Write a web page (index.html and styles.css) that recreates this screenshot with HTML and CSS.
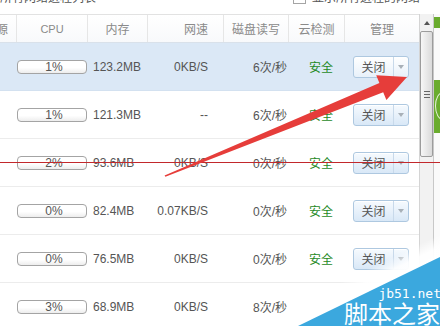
FILE: index.html
```html
<!DOCTYPE html>
<html lang="zh">
<head>
<meta charset="utf-8">
<link rel="stylesheet" href="styles.css">
</head>
<body>
<div class="screen">
  <div class="topbar">
    <span class="topbar-left">所有网络进程列表</span>
    <span class="topbar-check"><span class="cb"></span>显示所有进程的网络</span>
  </div>
  <div class="main">
    <div class="table">
      <div class="thead">
        <div class="th th-src">源</div>
        <div class="th th-cpu">CPU</div>
        <div class="th">内存</div>
        <div class="th th-speed">网速</div>
        <div class="th">磁盘读写</div>
        <div class="th">云检测</div>
        <div class="th">管理</div>
      </div>

      <div class="row selected">
        <div class="td"></div>
        <div class="td"><div class="bar">1%</div></div>
        <div class="td mem">123.2MB</div>
        <div class="td speed">0KB/S</div>
        <div class="td disk">6次/秒</div>
        <div class="td safe">安全</div>
        <div class="td manage"><div class="btn btn-active"><span class="btn-label">关闭</span><span class="btn-drop"></span></div></div>
      </div>
      <div class="row">
        <div class="td"></div>
        <div class="td"><div class="bar">1%</div></div>
        <div class="td mem">121.3MB</div>
        <div class="td speed">--</div>
        <div class="td disk">6次/秒</div>
        <div class="td safe">安全</div>
        <div class="td manage"><div class="btn"><span class="btn-label">关闭</span><span class="btn-drop"></span></div></div>
      </div>
      <div class="row">
        <div class="td"></div>
        <div class="td"><div class="bar">2%</div></div>
        <div class="td mem">93.6MB</div>
        <div class="td speed">0KB/S</div>
        <div class="td disk">0次/秒</div>
        <div class="td safe">安全</div>
        <div class="td manage"><div class="btn"><span class="btn-label">关闭</span><span class="btn-drop"></span></div></div>
      </div>
      <div class="row">
        <div class="td"></div>
        <div class="td"><div class="bar">0%</div></div>
        <div class="td mem">82.4MB</div>
        <div class="td speed">0.07KB/S</div>
        <div class="td disk">0次/秒</div>
        <div class="td safe">安全</div>
        <div class="td manage"><div class="btn"><span class="btn-label">关闭</span><span class="btn-drop"></span></div></div>
      </div>
      <div class="row">
        <div class="td"></div>
        <div class="td"><div class="bar">0%</div></div>
        <div class="td mem">76.5MB</div>
        <div class="td speed">0KB/S</div>
        <div class="td disk">0次/秒</div>
        <div class="td safe">安全</div>
        <div class="td manage"><div class="btn"><span class="btn-label">关闭</span><span class="btn-drop"></span></div></div>
      </div>
      <div class="row">
        <div class="td"></div>
        <div class="td"><div class="bar">3%</div></div>
        <div class="td mem">68.9MB</div>
        <div class="td speed">0KB/S</div>
        <div class="td disk">8次/秒</div>
        <div class="td safe"></div>
        <div class="td manage"></div>
      </div>
    </div>

    <div class="scrollbar">
      <div class="sb-up"><span class="sb-arrow"></span></div>
      <div class="sb-thumb"><span class="grip"></span></div>
    </div>
    <div class="side">
      <div class="side-green g1"></div>
      <div class="side-green g2"><span class="side-mark"></span></div>
    </div>
  </div>

  <div class="redline"></div>
  <svg class="arrow" width="440" height="326" viewBox="0 0 440 326">
    <polygon fill="#e63d3a" points="164.6,175.4 379.4,83.0 376.2,75.2 407,77 386.4,100 383.2,92.2 165.4,176.8"/>
  </svg>

  <div class="wm-fade"></div>
  <div class="watermark">
    <div class="wm-url">jb51.net</div>
    <div class="wm-name">脚本之家</div>
  </div>
</div>
</body>
</html>
```

FILE: styles.css
```css
html, body {
  margin: 0;
  padding: 0;
}

body {
  width: 440px;
  height: 326px;
  overflow: hidden;
  background: #fff;
  font-family: "Liberation Sans", "Noto Sans CJK SC", sans-serif;
  font-size: 12px;
  color: #555;
}

.screen {
  position: relative;
  width: 440px;
  height: 326px;
  overflow: hidden;
}

/* top strip (cut off) */
.topbar {
  height: 14px;
  overflow: hidden;
  display: flex;
  align-items: flex-start;
  font-family: "Noto Sans CJK SC", sans-serif;
  font-size: 12px;
  line-height: 12px;
  color: #555;
}

.topbar-left {
  width: 293px;
  flex: none;
  margin-top: -9px;
  white-space: nowrap;
}

.topbar-check {
  display: flex;
  gap: 6px;
  margin-top: -9px;
  white-space: nowrap;
}

.cb {
  width: 11px;
  height: 11px;
  border: 1px solid #a5a5a5;
  background: #fff;
}

.main {
  display: flex;
  height: 312px;
}

.table {
  width: 419px;
  flex: none;
}

.thead,
.row {
  display: grid;
  grid-template-columns: 16px 71px 60px 76px 65px 56px 75px;
}

.thead {
  height: 27px;
  border-top: 1px solid #e2e2e2;
  border-bottom: 1px solid #d9e1ea;
  background: linear-gradient(#ffffff, #f8f9fb);
}

.th {
  display: flex;
  align-items: center;
  justify-content: center;
  border-left: 1px solid #e6e6e6;
  color: #8a8a8a;
  font-family: "Noto Sans CJK SC", sans-serif;
  font-size: 12px;
  white-space: nowrap;
}

.th-src {
  border-left: none;
  justify-content: flex-end;
  padding-right: 8px;
}

.th-cpu {
  font-family: "Liberation Sans", sans-serif;
  font-size: 11px;
}

.th-speed {
  justify-content: flex-end;
  padding-right: 15px;
}

.row {
  height: 47px;
  border-bottom: 1px solid #ececec;
}

.row.selected {
  background: #dbe8f6;
  border-bottom-color: #d3e1f0;
}

.td {
  display: flex;
  align-items: center;
  white-space: nowrap;
}

.bar {
  width: 68px;
  height: 12px;
  margin-left: 1px;
  padding-left: 4px;
  box-sizing: content-box;
  width: 64px;
  border: 1px solid #a4a4a4;
  border-radius: 4px;
  background: linear-gradient(#ffffff 55%, #ededed);
  text-align: center;
  line-height: 12px;
  font-size: 12px;
  color: #555;
}

.mem {
  padding-left: 6px;
}

.speed {
  justify-content: flex-end;
  padding-right: 15px;
}

.disk {
  justify-content: flex-end;
  padding-right: 1px;
}

.safe {
  padding-left: 21px;
  color: #1f8a1f;
  font-family: "Noto Sans CJK SC", sans-serif;
}

.manage {
  padding-left: 9px;
}

.btn {
  display: flex;
  width: 54px;
  height: 20px;
  border: 1px solid #aec8e0;
  border-radius: 3px;
  background: linear-gradient(#f6fafe, #d9e8f7);
  box-shadow: inset 0 1px 0 #fff;
}

.btn-active {
  background: linear-gradient(#ffffff, #e8f1fa);
}

.btn-label {
  width: 39px;
  border-right: 1px solid #c8d9ea;
  display: flex;
  align-items: center;
  justify-content: center;
  font-family: "Noto Sans CJK SC", sans-serif;
  font-size: 12px;
  color: #555;
}

.btn-drop {
  flex: 1;
  display: flex;
  align-items: center;
  justify-content: center;
}

.btn-drop::after {
  content: "";
  width: 0;
  height: 0;
  border-top: 4px solid #a8b0b8;
  border-left: 3px solid transparent;
  border-right: 3px solid transparent;
}

/* scrollbar */
.scrollbar {
  width: 13px;
  flex: none;
  display: flex;
  flex-direction: column;
  align-items: center;
  background: #f2f2f2;
  border-left: 1px solid #d4d4d4;
}

.sb-up {
  height: 16px;
  width: 100%;
  display: flex;
  align-items: center;
  justify-content: center;
  padding-top: 2px;
  box-sizing: border-box;
}

.sb-arrow {
  width: 0;
  height: 0;
  border-bottom: 4px solid #555;
  border-left: 3px solid transparent;
  border-right: 3px solid transparent;
}

.sb-thumb {
  margin-top: 1px;
  width: 11px;
  height: 124px;
  border: 1px solid #9c9c9c;
  border-radius: 2px;
  background: linear-gradient(90deg, #f7f7f7, #dadada);
  display: flex;
  align-items: center;
  justify-content: center;
}

.grip {
  width: 6px;
  height: 5px;
  border-top: 1px solid #666;
  border-bottom: 1px solid #666;
  position: relative;
}

.grip::after {
  content: "";
  position: absolute;
  left: 0;
  right: 0;
  top: 2px;
  height: 1px;
  background: #666;
}

.side {
  width: 6px;
  flex: none;
  border-left: 1px solid #c8c8c8;
  display: flex;
  flex-direction: column;
  background: #fafafa;
}

.side-green {
  background: #6aac2e;
}

.g1 {
  margin-top: 3px;
  height: 11px;
}

.g2 {
  margin-top: 52px;
  height: 53px;
  position: relative;
  overflow: hidden;
}

.side-mark {
  position: absolute;
  left: 1px;
  top: 12px;
  width: 14px;
  height: 26px;
  border: 1px solid #e8f3dc;
  border-radius: 50%;
}

/* overlays */
.redline {
  position: absolute;
  left: 0;
  top: 162px;
  width: 440px;
  height: 1px;
  background: #c2282c;
}

.arrow {
  position: absolute;
  left: 0;
  top: 0;
}

.wm-fade {
  position: absolute;
  right: 0;
  bottom: 0;
  width: 190px;
  height: 92px;
  background: linear-gradient(to bottom right, rgba(255, 255, 255, 0) 50%, rgba(255, 255, 255, 0.92) 57%, #fff 64%);
}

.watermark {
  position: absolute;
  right: 0;
  bottom: 0;
  width: 142px;
  height: 69px;
  background: #3ba8de;
  clip-path: polygon(100% 0, 100% 100%, 0 100%);
  display: flex;
  flex-direction: column;
  align-items: flex-end;
  justify-content: flex-end;
  color: #fff;
}

.wm-url {
  font-family: "DejaVu Sans Mono", monospace;
  font-size: 13px;
  line-height: 13px;
  margin-right: -1px;
  margin-bottom: 1px;
}

.wm-name {
  font-family: "Noto Sans CJK SC", sans-serif;
  font-size: 24px;
  line-height: 24px;
  margin-bottom: 1px;
}
```
